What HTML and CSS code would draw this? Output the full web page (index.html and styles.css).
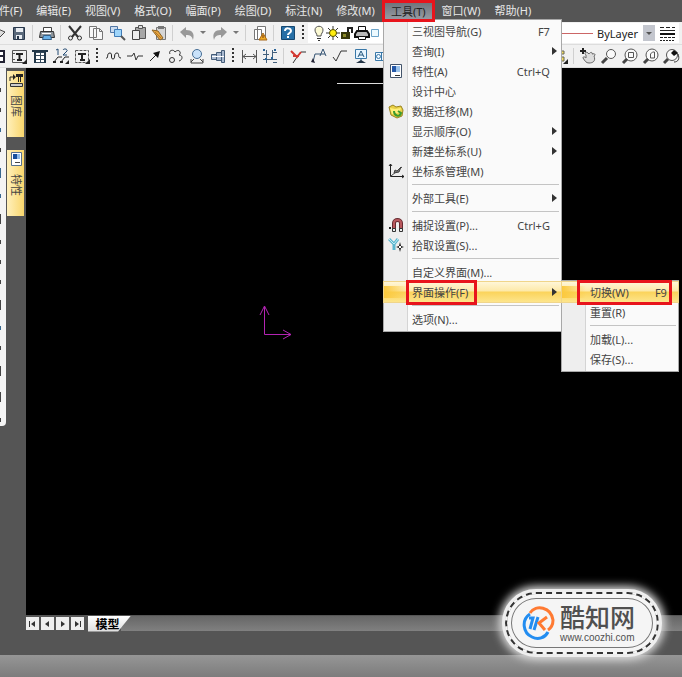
FILE: index.html
```html
<!DOCTYPE html>
<html lang="zh-CN">
<head>
  <meta charset="UTF-8">
  <title>CAD 工具菜单</title>
  <link rel="stylesheet" href="styles.css">
</head>
<body>
  <nav class="menubar">
    <button>文件(F)</button>
    <button>编辑(E)</button>
    <button>视图(V)</button>
    <button>格式(O)</button>
    <button>幅面(P)</button>
    <button>绘图(D)</button>
    <button>标注(N)</button>
    <button>修改(M)</button>
    <div class="menu-open">
      <button class="active">工具(T)</button>
      <div class="dropdown">
        <button class="item"><span class="ico"></span><span class="name">三视图导航(G)</span><span class="key">F7</span></button>
        <button class="item more"><span class="ico"></span><span class="name">查询(I)</span></button>
        <button class="item"><span class="ico"><svg width="16" height="16" viewBox="0 0 16 16"><path fill="#fff" stroke="#43546b" d="M2.500 1.500h11v13h-11z"/><path fill="#2458a8" d="M4 3h4v6H4z"/><path fill="#9cc3ea" d="M8 3h4v6H8z"/><path stroke="#333" d="M7 12.500h5"/></svg></span><span class="name">特性(A)</span><span class="key">Ctrl+Q</span></button>
        <button class="item"><span class="ico"></span><span class="name">设计中心</span></button>
        <button class="item"><span class="ico"><svg width="16" height="16" viewBox="0 0 16 16"><path fill="#e8cf45" stroke="#9a8420" d="M1 4l4-2 3 2 5-1 2 4-1 6-5 2-6-3z"/><path fill="#fff07a" d="M2 5l5 1 6-1-2 5-7 1z"/><path fill="none" stroke="#3c9a2e" stroke-width="2" d="M6 8c0 5 5 6 7 3M10 8l3 2-2 3"/></svg></span><span class="name">数据迁移(M)</span></button>
        <button class="item more"><span class="ico"></span><span class="name">显示顺序(O)</span></button>
        <button class="item more"><span class="ico"></span><span class="name">新建坐标系(U)</span></button>
        <button class="item"><span class="ico"><svg width="16" height="16" viewBox="0 0 16 16"><path fill="none" stroke="#222" d="M2.500 1v12.500H16M1 3l1.500-2L4 3M14 12l2 1.500-2 1.500"/><path stroke="#444" d="M3 13L14 4"/><path fill="#777" stroke="#444" d="M6 10l1-3 2 1 4-4-2 5z"/></svg></span><span class="name">坐标系管理(M)</span></button>
        <hr>
        <button class="item more"><span class="ico"></span><span class="name">外部工具(E)</span></button>
        <hr>
        <button class="item"><span class="ico"><svg width="16" height="16" viewBox="0 0 16 16"><path fill="none" stroke="#652a30" stroke-width="4" d="M6 13V6c0-4 7-4 7 0v7"/><path fill="none" stroke="#b8575c" stroke-width="2" d="M6 11V6c0-4 7-4 7 0v5"/><path fill="#eee" stroke="#333" d="M4.500 11.500h3v3h-3zM11.500 11.500h3v3h-3z"/><path fill="#222" d="M1 10h2v2H1z"/></svg></span><span class="name">捕捉设置(P)...</span><span class="key">Ctrl+G</span></button>
        <button class="item"><span class="ico"><svg width="16" height="16" viewBox="0 0 16 16"><path fill="none" stroke="#5cb6cf" stroke-width="3" d="M1 2l5 5 4-5M6 7v6"/><path fill="none" stroke="#c2edf5" d="M1 2l5 5 4-5"/><path fill="#111" d="M12 5l1 4 3 1-3 1-1 4-1-4-3-1 3-1z"/><path fill="#fff" d="M11 9h2v2h-2z"/></svg></span><span class="name">拾取设置(S)...</span></button>
        <hr>
        <button class="item"><span class="ico"></span><span class="name">自定义界面(M)...</span></button>
        <div class="sub-open">
          <button class="item more hot"><span class="ico"></span><span class="name">界面操作(F)</span></button>
          <span class="mark mark-name"></span>
          <div class="dropdown submenu">
            <div class="sub-open">
              <button class="item hot"><span class="ico"></span><span class="name">切换(W)</span><span class="key">F9</span></button>
              <span class="mark mark-row"></span>
            </div>
            <button class="item"><span class="ico"></span><span class="name">重置(R)</span></button>
            <hr>
            <button class="item"><span class="ico"></span><span class="name">加载(L)...</span></button>
            <button class="item"><span class="ico"></span><span class="name">保存(S)...</span></button>
          </div>
        </div>
        <hr>
        <button class="item"><span class="ico"></span><span class="name">选项(N)...</span></button>
      </div>
    </div>
    <button>窗口(W)</button>
    <button>帮助(H)</button>
  </nav>

  <div class="toolbar">
    <button aria-label="打开"><svg width="18" height="18" viewBox="0 0 18 18"><path fill="#ddd" stroke="#444" d="M4 12l5-7 7 3-6 6z"/></svg></button>
    <button aria-label="保存"><svg width="18" height="18" viewBox="0 0 18 18"><path fill="#59687a" stroke="#27364a" d="M3.500 3.500h11v12h-11z"/><path fill="#e9edf2" d="M6 4h7v4H6zM6 11h6v4H6z"/><path fill="#27364a" d="M7 12h2v3H7z"/></svg></button>
    <i class="sep"></i>
    <button aria-label="打印"><svg width="18" height="18" viewBox="0 0 18 18"><path fill="#fff" stroke="#444" d="M5.500 3.500h8V8h-8z"/><path fill="#8d959c" stroke="#333" d="M2.500 7.500h13l1 6h-15z"/><path fill="#69b1e8" stroke="#34618a" d="M5.500 11.500h7l1 4h-9z"/><path stroke="#fff" d="M4 9.500h9"/></svg></button>
    <i class="sep"></i>
    <button aria-label="剪切"><svg width="18" height="18" viewBox="0 0 18 18"><path fill="none" stroke="#333" stroke-width="2" d="M3 2l9 11M15 2L6 13"/><circle cx="4.500" cy="14" r="2" fill="none" stroke="#333"/><circle cx="13.500" cy="14" r="2" fill="none" stroke="#333"/></svg></button>
    <button aria-label="复制"><svg width="18" height="18" viewBox="0 0 18 18"><path fill="#f8f8f8" stroke="#777" d="M2.500 2.500h7v11h-7zM6.500 4.500h6l3 3v8h-9z"/><path fill="none" stroke="#777" d="M12.500 4.500v3h3"/></svg></button>
    <button aria-label="基点复制"><svg width="18" height="18" viewBox="0 0 18 18"><path fill="#cbdcf0" stroke="#5277a5" d="M2.500 2.500h7v6h-7z"/><path fill="#9fd5fa" stroke="#3f7cb8" d="M6.500 5.500h7v7h-7z"/><path stroke="#555" stroke-width="2" d="M13 12l4 4"/></svg></button>
    <button aria-label="粘贴"><svg width="18" height="18" viewBox="0 0 18 18"><path fill="#a6a6a6" stroke="#555" d="M6.500 3.500h10v11h-10z"/><path fill="#ddd" stroke="#555" d="M9.500 1.500h4v3h-4z"/><path fill="#eee" stroke="#444" d="M3.500 6.500h7v9h-7z"/></svg></button>
    <button aria-label="特性刷"><svg width="18" height="18" viewBox="0 0 18 18"><path fill="#d5d5d5" stroke="#777" d="M6.500 3.500h9v12h-9z"/><path fill="#777" d="M8 2h6v3H8z"/><path fill="#e9a43d" stroke="#8b6426" d="M2 6l6 1 5 7-3 2z"/><path stroke="#b07a2c" d="M5 8l6 6"/></svg></button>
    <i class="sep"></i>
    <button aria-label="撤销"><svg width="18" height="18" viewBox="0 0 18 18"><path fill="#999" d="M2 8l6-5v3c6 0 9 3 7 10-1-4-3-5-7-5v3z"/></svg></button>
    <button class="tiny" aria-label="撤销列表"><svg width="6" height="4" viewBox="0 0 6 4"><path fill="#777" d="M0 0h6L3 3z"/></svg></button>
    <button aria-label="重做"><svg width="18" height="18" viewBox="0 0 18 18"><path fill="#999" d="M16 8l-6-5v3C4 6 1 9 3 16c1-4 3-5 7-5v3z"/></svg></button>
    <button class="tiny" aria-label="重做列表"><svg width="6" height="4" viewBox="0 0 6 4"><path fill="#777" d="M0 0h6L3 3z"/></svg></button>
    <i class="sep"></i>
    <button aria-label="清理"><svg width="18" height="18" viewBox="0 0 18 18"><path fill="#fff" stroke="#777" d="M6.500 2.500h8v13h-8zM3.500 5.500h7v10h-7z"/><path fill="#f0ac24" stroke="#a7691b" d="M12 9l4 7H8z"/><path stroke="#7b3b12" d="M12 11v3"/></svg></button>
    <i class="sep"></i>
    <button aria-label="帮助"><svg width="18" height="18" viewBox="0 0 18 18"><path fill="#276fa6" stroke="#15466f" d="M2.500 2.500h13v13h-13z"/><path fill="none" stroke="#fff" stroke-width="2" d="M6 7c0-4 6-3 6 0 0 2-3 2-3 4M9 12v2"/></svg></button>
    <i class="grip"></i>
    <div class="layer">
      <svg width="14" height="18" viewBox="0 0 14 18"><path fill="#fcfad4" stroke="#555" d="M5 12c0-3-2-3-2-6 0-5 8-5 8 0 0 3-2 3-2 6z"/><path stroke="#333" d="M5 14.500h4M6 16.500h2"/></svg>
      <svg width="14" height="18" viewBox="0 0 14 18"><path stroke="#333" d="M7 2v14M0 9h14M2 4l10 10M12 4L2 14"/><circle cx="7" cy="9" r="3.500" fill="#ffee10" stroke="#554f00"/></svg>
      <svg width="14" height="18" viewBox="0 0 14 18"><path fill="none" stroke="#222" stroke-width="2" d="M8 9V4h4v5"/><path fill="#37370a" d="M1 8h9v7H1z"/><path fill="#8c8c28" d="M3 10h3v3H3z"/></svg>
      <svg width="16" height="18" viewBox="0 0 16 18"><path fill="#fff" stroke="#111" d="M4.500 2.500h7V7h-7z"/><path fill="#bbb" stroke="#111" stroke-width="2" d="M3 7h10l2 3v3H1v-3z"/><path fill="#fff" stroke="#111" d="M4.500 12.500h7v3h-7z"/></svg>
      <svg width="10" height="18" viewBox="0 0 10 18"><path fill="#edfaff" stroke="#6ba3c8" d="M1.500 5.500h7v7h-7z"/></svg>
    </div>
    <div class="linetype">
      <i class="line"></i>
      <select aria-label="线型"><option>ByLayer</option></select>
      <span class="arrow"></span>
      <svg width="24" height="18" viewBox="0 0 24 18"><path stroke="#222" d="M5 3.500h15" stroke-dasharray="4 2"/><path stroke="#222" d="M5 6.500h15"/><path stroke="#111" stroke-width="2" d="M5 10h15"/><path stroke="#222" d="M5 13.500h15" stroke-dasharray="3 1"/><path stroke="#222" d="M5 16.500h15" stroke-dasharray="2 1"/></svg>
    </div>
  </div>

  <div class="toolbar">
    <button aria-label="表格"><svg width="18" height="18" viewBox="0 0 18 18"><path fill="#fff" stroke="#223" stroke-width="2" d="M3 4h12v11H3zM9 4v11M3 9h12"/></svg></button>
    <button aria-label="标题栏"><svg width="18" height="18" viewBox="0 0 18 18"><path fill="none" stroke="#555" d="M2.500 3.500h14v12h-14zM2 6.500h3M2 12.500h3"/><path fill="none" stroke="#222" stroke-width="2" d="M6 7h7M9.500 6v7M7 13h5"/><path fill="#222" d="M17 12v5h-5z"/></svg></button>
    <button aria-label="参数栏"><svg width="18" height="18" viewBox="0 0 18 18"><path fill="#fff" stroke="#34485a" d="M4.500 5.500h10v10h-10zM4 8.500h11M4 12.500h11M9.500 5v10"/><path stroke="#223748" stroke-width="2" d="M1 4h16M4 4v12M14 4v12"/></svg></button>
    <button aria-label="序号"><svg width="18" height="18" viewBox="0 0 18 18"><path fill="none" stroke="#234a72" d="M4 3l2-1v6M11 3c1-2 5-1 4 1l-4 4h4"/><path fill="none" stroke="#222" d="M2 15l4-5h4M9 15l4-5h4"/><path fill="#222" d="M1 14h3v2H1zM8 14h3v2H8zM17 13v4h-4z"/></svg></button>
    <button aria-label="明细表"><svg width="18" height="18" viewBox="0 0 18 18"><path fill="none" stroke="#555" stroke-dasharray="3 1" d="M2.500 3.500h13v12h-13z"/><path fill="none" stroke="#222" stroke-width="2" d="M5 7h8M9 6v7M7 13h5"/><path fill="#222" d="M17 12v5h-5z"/></svg></button>
    <i class="grip"></i>
    <button aria-label="波浪线"><svg width="18" height="18" viewBox="0 0 18 18"><path fill="none" stroke="#222" d="M2 11c3 1 0-5 4-5 3 0 0 6 3 6s0-6 4-6c3 0 0 5 4 5"/></svg></button>
    <button aria-label="双折线"><svg width="18" height="18" viewBox="0 0 18 18"><path fill="none" stroke="#333" d="M2 9h5l2-3 2 7 2-4h5"/></svg></button>
    <button aria-label="箭头"><svg width="18" height="18" viewBox="0 0 18 18"><path stroke="#222" stroke-width="1" d="M4 14l7-7"/><path fill="#111" d="M14 4l-2 7-5-5z"/></svg></button>
    <button aria-label="云线"><svg width="18" height="18" viewBox="0 0 18 18"><path fill="none" stroke="#333" stroke-width="1" d="M3 7c-2-4 4-5 5-2 4-4 7 1 4 3 4 0 4 5 0 6"/><circle cx="5" cy="13" r="2.500" fill="none" stroke="#333"/></svg></button>
    <button aria-label="圆孔"><svg width="18" height="18" viewBox="0 0 18 18"><circle cx="9" cy="7" r="4.500" fill="#c9e2fa" stroke="#456d94"/><path fill="none" stroke="#444" d="M3 12v4h12v-4M3 15l3-3M15 15l-3-3"/></svg></button>
    <button aria-label="轴孔"><svg width="18" height="18" viewBox="0 0 18 18"><path fill="#a9b9d0" stroke="#445c78" d="M2.500 7.500h5v5h-5zM7.500 5.500h5v8h-5zM12.500 3.500h3v12h-3z"/><path stroke="#fff" d="M3 9.500h12"/></svg></button>
    <i class="grip"></i>
    <button aria-label="尺寸"><svg width="18" height="18" viewBox="0 0 18 18"><path fill="none" stroke="#555" d="M2.500 3v13M16.500 3v13M3 9.500h13M6 7l-3 2.500L6 12M13 7l3 2.500L13 12"/></svg></button>
    <button aria-label="坐标标注"><svg width="18" height="18" viewBox="0 0 18 18"><path fill="none" stroke="#44607c" d="M5.500 3v13M11.500 3v9M2 12.500h14M2 7.500h6M12 5.500h4M12 15.500h4"/><path fill="#2b6498" d="M2 2h2v2H2zM13 2h2v2h-2zM10 10h2v2h-2zM4 11h2v2H4z"/></svg></button>
    <i class="sep"></i>
    <button aria-label="倒角标注"><svg width="18" height="18" viewBox="0 0 18 18"><path fill="none" stroke="#333" d="M12 5h5M8 10l-4 6"/><path fill="none" stroke="#d33932" stroke-width="2" d="M2 4l6 6 4-5M4 9h6"/></svg></button>
    <button aria-label="引出说明"><svg width="18" height="18" viewBox="0 0 18 18"><path fill="none" stroke="#335272" d="M3 15l2-8h6M10 9l3-7 3 7M11 7h4"/><path fill="#223" d="M1 15l2-4 2 5z"/></svg></button>
    <button aria-label="粗糙度"><svg width="18" height="18" viewBox="0 0 18 18"><path fill="none" stroke="#333" stroke-width="1" d="M2 10l3 4 5-10h6"/></svg></button>
    <button aria-label="基准代号"><svg width="18" height="18" viewBox="0 0 18 18"><path fill="#e8f5ff" stroke="#3978a8" d="M3.500 2.500h11v9h-11z"/><path fill="none" stroke="#23577d" d="M6 10l3-6 3 6M7 8h4M9 12v3"/><path fill="#234" d="M4 16l5-3 5 3z"/></svg></button>
    <button aria-label="形位公差"><svg width="18" height="18" viewBox="0 0 18 18"><path fill="#eef7ff" stroke="#3978a8" d="M2.500 5.500h14v8h-14zM8.500 5v9"/><circle cx="5.500" cy="9.500" r="2" fill="none" stroke="#3978a8"/></svg></button>
    <div class="zooms">
      <button aria-label="编辑"><svg width="18" height="18" viewBox="0 0 18 18"><path fill="#f5dd61" stroke="#665" d="M3 4h10v3H3zM3 10h10v4H3z"/><path fill="#222" d="M17 12v5h-5z"/></svg></button>
      <i class="sep"></i>
      <button aria-label="平移"><svg width="18" height="18" viewBox="0 0 18 18"><path fill="#ddd" stroke="#666" d="M7 8c-3-3 1-4 3-1 2-3 4-1 3 0 3-1 4 1 2 2 2 5-1 7-5 7-3 0-4-2-6-5 0-2 2-1 3 0z"/><path stroke="#222" stroke-width="2" d="M1 4h6M4 1v6"/></svg></button>
      <button aria-label="窗口缩放"><svg width="18" height="18" viewBox="0 0 18 18"><circle cx="11" cy="7" r="4.500" fill="#fafafa" stroke="#555"/><path stroke="#444" stroke-width="3" d="M7 11l-5 5"/></svg></button>
      <button aria-label="全部显示"><svg width="18" height="18" viewBox="0 0 18 18"><circle cx="10" cy="8" r="6" fill="#fafafa" stroke="#555"/><path fill="none" stroke="#555" d="M7.500 5.500h5v5h-5z"/><path stroke="#444" stroke-width="3" d="M6 12l-4 4"/></svg></button>
      <button aria-label="上一步"><svg width="18" height="18" viewBox="0 0 18 18"><circle cx="10" cy="8" r="6" fill="#fafafa" stroke="#555"/><path fill="none" stroke="#555" d="M8.500 11V7l2-2h2v6z"/><path stroke="#444" stroke-width="3" d="M6 12l-4 4"/></svg></button>
      <button aria-label="动态缩放"><svg width="18" height="18" viewBox="0 0 18 18"><circle cx="9" cy="8" r="5.500" fill="#fafafa" stroke="#555"/><path stroke="#444" stroke-width="3" d="M5 12l-4 4"/><path fill="none" stroke="#333" d="M11 15c4 0 6-3 4-8"/><path fill="#111" d="M11 3l4 3-4 3-3-3z"/></svg></button>
    </div>
  </div>

  <main class="workspace">
    <aside class="edge">
      <i></i><i></i><i class="blue"></i><i></i><i class="blue tall"></i><i class="blue"></i><i class="tall"></i><i></i><i></i><i></i><i class="tall"></i><i class="blue"></i><i></i><i class="tall"></i><i class="tall"></i><i></i>
    </aside>
    <aside class="dock">
      <button><svg width="16" height="16" viewBox="0 0 16 16"><path fill="none" stroke="#222" d="M2 9V5h4M10.500 3v7M12.500 3v7"/><path fill="#222" d="M5 2l3 3-3 3zM8 2h7v3H8z"/><path fill="#ccc" stroke="#333" d="M2.500 11.500h12v3h-12z"/></svg><span>图库</span></button>
      <button><svg width="16" height="16" viewBox="0 0 16 16"><path fill="#fff" stroke="#56718f" d="M3.500 1.500h10v13h-10z"/><path fill="#174f9d" d="M5 3h4v5H5z"/><path fill="#8db9e6" d="M9 3h3v5H9z"/><path stroke="#444" d="M7 11.500h5"/></svg><span>特性</span></button>
    </aside>
    <section class="view">
      <svg class="entity" width="100" height="1"><path stroke="#ddd" d="M0 .5h100"/></svg>
      <svg class="ucs" width="34" height="36" viewBox="0 0 34 36"><path fill="none" stroke="#b324b3" d="M5.500 3v27.500H32M1 11l4.500-9L10 11M24 26l8 4.500-8 4.500"/></svg>
    </section>
  </main>

  <footer>
    <div class="sheets">
      <button aria-label="第一页"><svg width="9" height="8" viewBox="0 0 9 8"><path fill="#333" d="M1 1h1v6H1zM7 1v6L3 4z"/></svg></button>
      <button aria-label="上一页"><svg width="9" height="8" viewBox="0 0 9 8"><path fill="#333" d="M6 1v6L2 4z"/></svg></button>
      <button aria-label="下一页"><svg width="9" height="8" viewBox="0 0 9 8"><path fill="#333" d="M3 1v6l4-3z"/></svg></button>
      <button aria-label="最后一页"><svg width="9" height="8" viewBox="0 0 9 8"><path fill="#333" d="M2 1v6l4-3zM7 1h1v6H7z"/></svg></button>
      <button class="sheet">模型</button>
      <i class="track"></i>
    </div>
    <div class="status"></div>
  </footer>

  <div class="brand">
    <svg width="34" height="36" viewBox="0 0 34 36"><path fill="none" stroke="#ff7a32" stroke-width="3" d="M8 8C14-1 29 2 31 15c0 5-2 8-5 10"/><path fill="none" stroke="#238df0" stroke-width="3" d="M8 9C-1 15 1 28 10 32c6 3 13 1 16-5"/><path fill="none" stroke="#238df0" stroke-width="3" d="M7 13h4l-3 11M16 12l-4 13"/><path fill="none" stroke="#ff7a32" stroke-width="3" d="M25 12l-8 6 6 7"/></svg>
    <div class="brand-text">
      <strong>酷知网</strong>
      <span>www.coozhi.com</span>
    </div>
  </div>
</body>
</html>
```

FILE: styles.css
```css
* {
  box-sizing: border-box;
}
body {
  margin: 0;
  min-height: 100vh;
  display: flex;
  flex-direction: column;
  position: relative;
  overflow: hidden;
  background: #555;
  font-family: "Noto Sans", "Noto Sans CJK SC", sans-serif;
  font-size: 11px;
  color: #444;
}
button {
  border: 0;
  padding: 0;
  background: none;
  font: inherit;
  color: inherit;
}
svg {
  display: block;
  flex: none;
}

/* menu bar */
.menubar {
  display: flex;
  height: 22px;
  margin-left: -19px;
  white-space: nowrap;
}
.menubar > button {
  flex: none;
  height: 20px;
  padding: 0 7px;
  color: #e8e8e8;
}
.menu-open {
  position: relative;
  z-index: 5;
}
.active {
  position: relative;
  z-index: 1;
  height: 22px;
  padding: 0 6px;
  border: 3px solid #e8141c;
  background: linear-gradient(#70747c, #959aa3);
  color: #222;
}
.dropdown {
  position: absolute;
  top: 19px;
  left: 1px;
  width: 179px;
  padding: 1px 0 2px;
  border: 1px solid #a8a8a8;
  background: linear-gradient(90deg, #eee 23px, #d4d4d4 23px, #d4d4d4 24px, #fafafa 24px);
}
.item {
  display: flex;
  align-items: center;
  width: 100%;
  height: 20px;
  padding-right: 11px;
  text-align: left;
}
.ico {
  display: flex;
  justify-content: center;
  width: 24px;
  margin-right: 4px;
}
.name {
  flex: 1;
  white-space: nowrap;
}
.more::after {
  content: "";
  border: 4px solid transparent;
  border-left: 5px solid #333;
  border-right: 0;
  margin-right: -7px;
}
.dropdown hr {
  height: 1px;
  margin: 3px 2px 3px 28px;
  border: 0;
  background: #c4c4c4;
}
.hot {
  background: linear-gradient(#fff6d8, #fde9a8 45%, #fbd35b 50%, #fde58c);
  box-shadow: 0 0 0 1px #f0d58a;
}
.hot .ico {
  height: 12px;
  background: linear-gradient(90deg, #fbc93e, transparent);
}
.sub-open {
  position: relative;
}
.submenu {
  top: -2px;
  left: 177px;
  width: 118px;
}
.mark {
  position: absolute;
  top: -2px;
  height: 25px;
  border: 3px solid #e8141c;
  pointer-events: none;
}
.mark-name {
  left: 22px;
  width: 71px;
}
.mark-row {
  left: 15px;
  right: 6px;
}

/* toolbars */
.toolbar {
  display: flex;
  align-items: center;
  height: 23px;
  margin-left: -13px;
  border-bottom: 1px solid #ddd;
  background: #f1f1f1;
}
.toolbar button {
  display: flex;
  flex: none;
  align-items: center;
  justify-content: center;
  width: 21px;
  height: 22px;
}
.toolbar .tiny {
  width: 12px;
}
.sep {
  flex: none;
  width: 1px;
  height: 16px;
  margin: 0 3px;
  background: #d0d0d0;
}
.grip {
  flex: none;
  width: 2px;
  height: 16px;
  margin: 0 4px;
  background: repeating-linear-gradient(#333 0 2px, transparent 2px 4px);
}
.layer {
  display: flex;
  align-items: center;
  flex: 1;
  height: 20px;
  padding-left: 4px;
  background: #fff;
}
.linetype {
  display: flex;
  align-items: center;
  width: 121px;
  height: 20px;
  margin-right: 3px;
  background: #fff;
}
.line {
  width: 35px;
  height: 1px;
  background: #c66;
}
.linetype select {
  appearance: none;
  flex: 1;
  min-width: 0;
  padding: 0 0 0 4px;
  border: 0;
  background: none;
  color: #222;
  font: inherit;
}
.arrow {
  display: flex;
  align-items: center;
  justify-content: center;
  width: 12px;
  height: 16px;
  background: #c3c6ce;
}
.arrow::after {
  content: "";
  border: 3px solid transparent;
  border-top-color: #555;
  border-bottom: 0;
}
.zooms {
  display: flex;
  align-items: center;
  margin-left: auto;
}

/* drawing area */
.workspace {
  flex: 1;
  display: flex;
}
.edge {
  align-self: flex-start;
  display: flex;
  flex-direction: column;
  gap: 16px;
  width: 6px;
  padding: 20px 0 4px;
  border-radius: 0 0 4px 0;
  background: #f4f4f4;
}
.edge i {
  width: 1px;
  height: 4px;
  background: #444;
}
.edge .blue {
  background: #38688f;
}
.edge .tall {
  height: 10px;
}
.dock {
  display: flex;
  flex-direction: column;
  gap: 13px;
  width: 20px;
  padding: 3px 1px;
}
.dock button {
  display: flex;
  flex-direction: column;
  align-items: center;
  gap: 7px;
  width: 17px;
  height: 66px;
  padding-top: 1px;
  background: linear-gradient(90deg, #fff0bc, #f9d66c);
}
.dock span {
  writing-mode: vertical-rl;
  text-orientation: sideways;
  line-height: 16px;
}
.view {
  flex: 1;
  position: relative;
  background: #000;
}
.entity {
  position: absolute;
  top: 15px;
  left: 311px;
}
.ucs {
  position: absolute;
  top: 236px;
  left: 233px;
}

/* sheet tabs and status bar */
.sheets {
  display: flex;
  align-items: center;
  gap: 2px;
  height: 17px;
  padding-left: 26px;
}
.sheets button {
  display: flex;
  align-items: center;
  justify-content: center;
  width: 13px;
  height: 13px;
  background: #eee;
}
.sheets .sheet {
  z-index: 1;
  width: 43px;
  height: 16px;
  margin-left: 2px;
  padding-right: 4px;
  background: linear-gradient(#fff, #ddd);
  clip-path: polygon(0 0, 100% 0, 70% 100%, 0 100%);
  color: #000;
  font-size: 12px;
  font-weight: bold;
}
.track {
  flex: 1;
  height: 15px;
  margin-left: -12px;
  background: linear-gradient(#666, #808080);
}
.status {
  height: 22px;
  margin-top: 23px;
  background: linear-gradient(#969696, #7c7c7c);
}

/* site badge */
.brand {
  position: absolute;
  right: 23px;
  bottom: 23px;
  display: flex;
  align-items: center;
  gap: 4px;
  width: 154px;
  height: 62px;
  padding-left: 15px;
  border: 2px dashed #333;
  border-radius: 31px;
  background: #f5f5f5;
  outline: 3px solid #eee;
  box-shadow: 0 0 8px 6px #ddd, inset 0 0 0 4px #f5f5f5, inset 0 0 0 5px #777;
}
.brand-text {
  display: flex;
  flex-direction: column;
  color: #505050;
}
.brand strong {
  font-size: 25px;
  line-height: 29px;
  font-weight: 500;
}
.brand span {
  font-family: "Liberation Sans", sans-serif;
  font-size: 10px;
  line-height: 11px;
}
```
